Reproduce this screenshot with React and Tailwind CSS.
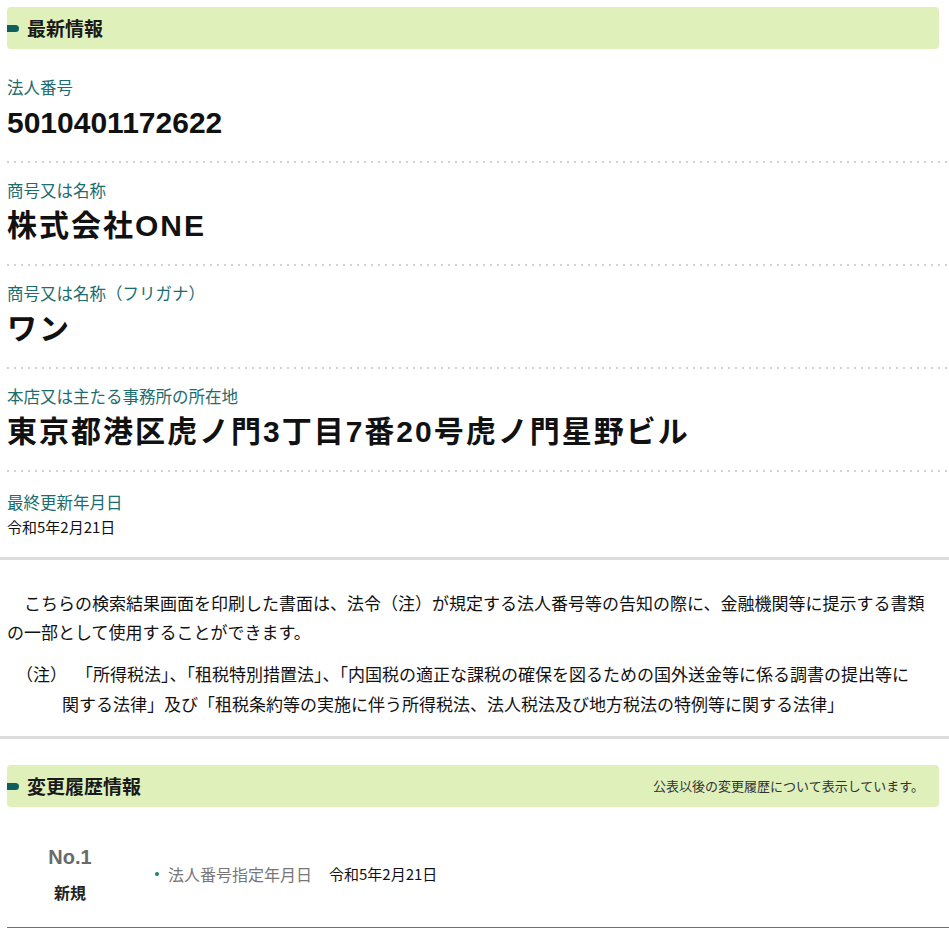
export default function App() {
  const Dots = () => (
    <div className="h-[2px] bg-[linear-gradient(to_right,#d2d2d2_2px,transparent_2px)] bg-[length:7px_2px] bg-repeat-x" />
  );

  const Header = ({ title, note }) => (
    <div className="mr-[10px] h-[42px] rounded-[4px] bg-[#dff0bb] flex items-center">
      <span className="w-[12px] h-[7px] rounded-r-full bg-[#0f5f5f]" />
      <h2 className="ml-[8px] text-[19px] leading-[24px] font-bold text-[#1a1a1a]">{title}</h2>
      {note && (
        <p className="ml-auto mr-[15px] text-[13px] leading-[18px] text-[#333]">{note}</p>
      )}
    </div>
  );

  const items = [
    { label: "法人番号", value: "5010401172622", track: "tracking-[0px]" },
    { label: "商号又は名称", value: "株式会社ONE", track: "tracking-[2px]" },
    { label: "商号又は名称（フリガナ）", value: "ワン", track: "tracking-[2px]" },
    {
      label: "本店又は主たる事務所の所在地",
      value: "東京都港区虎ノ門3丁目7番20号虎ノ門星野ビル",
      track: "tracking-[2px]",
    },
  ];

  return (
    <div className="w-full min-h-[941px] bg-white font-['Noto_Sans_CJK_JP',sans-serif] text-[#111]">
      {/* 最新情報 */}
      <section className="pl-[7px] pt-[7px]">
        <Header title="最新情報" />
        <div className="mt-[8px] flex flex-col">
          {items.map((it, i) => (
            <div key={it.label} className="flex flex-col">
              <div className={i === 0 ? "pt-[19px] pb-[18px]" : "pt-[16px] pb-[18px]"}>
                <div className="text-[16.5px] leading-[22px] text-[#1b6d6e]">{it.label}</div>
                <div
                  className={`mt-[5px] text-[30px] leading-[40px] font-bold text-[#111] font-['Liberation_Sans','Noto_Sans_CJK_JP',sans-serif] whitespace-nowrap ${it.track}`}
                >
                  {it.value}
                </div>
              </div>
              <Dots />
            </div>
          ))}
          <div className="pt-[19px] pb-[19px]">
            <div className="text-[16.5px] leading-[22px] text-[#1b6d6e]">最終更新年月日</div>
            <div className="mt-[3px] text-[15px] leading-[22px] text-[#111]">令和5年2月21日</div>
          </div>
        </div>
      </section>

      <div className="border-t-[3px] border-[#dcdcdc]" />

      {/* 注意書き */}
      <section className="pl-[7px] pr-[7px] pt-[28px] pb-[17px]">
        <p className="text-[17px] leading-[29px] indent-[17px] whitespace-nowrap">
          こちらの検索結果画面を印刷した書面は、法令（注）が規定する法人番号等の告知の際に、金融機関等に提示する書類
          <br />
          の一部として使用することができます。
        </p>
        <p className="mt-[13px] pl-[55px] -indent-[46px] text-[17px] leading-[30px] whitespace-nowrap">
          （注）<span className="inline-block w-[9px]" />「所得税法」、「租税特別措置法」、「内国税の適正な課税の確保を図るための国外送金等に係る調書の提出等に
          <br />
          関する法律」及び「租税条約等の実施に伴う所得税法、法人税法及び地方税法の特例等に関する法律」
        </p>
      </section>

      <div className="border-t-[3px] border-[#dcdcdc]" />

      {/* 変更履歴情報 */}
      <section className="pl-[7px] pt-[26px]">
        <Header title="変更履歴情報" note="公表以後の変更履歴について表示しています。" />
        <div className="flex items-center pt-[38px] pb-[24px]">
          <div className="w-[126px] flex flex-col items-center">
            <div className="text-[20px] leading-[24px] font-bold text-[#6a6a6a] font-['Liberation_Sans',sans-serif]">
              No.1
            </div>
            <div className="mt-[12px] text-[16px] leading-[22px] font-bold text-[#222]">新規</div>
          </div>
          <ul className="pl-[22px]">
            <li className="flex items-center text-[16px] leading-[22px]">
              <span className="w-[4px] h-[4px] rounded-full bg-[#1d8070]" />
              <span className="ml-[9px] text-[#777]">法人番号指定年月日</span>
              <span className="ml-[17px] text-[15px] text-[#111]">令和5年2月21日</span>
            </li>
          </ul>
        </div>
        <div className="h-px bg-[#23967a]" />
      </section>
    </div>
  );
}
